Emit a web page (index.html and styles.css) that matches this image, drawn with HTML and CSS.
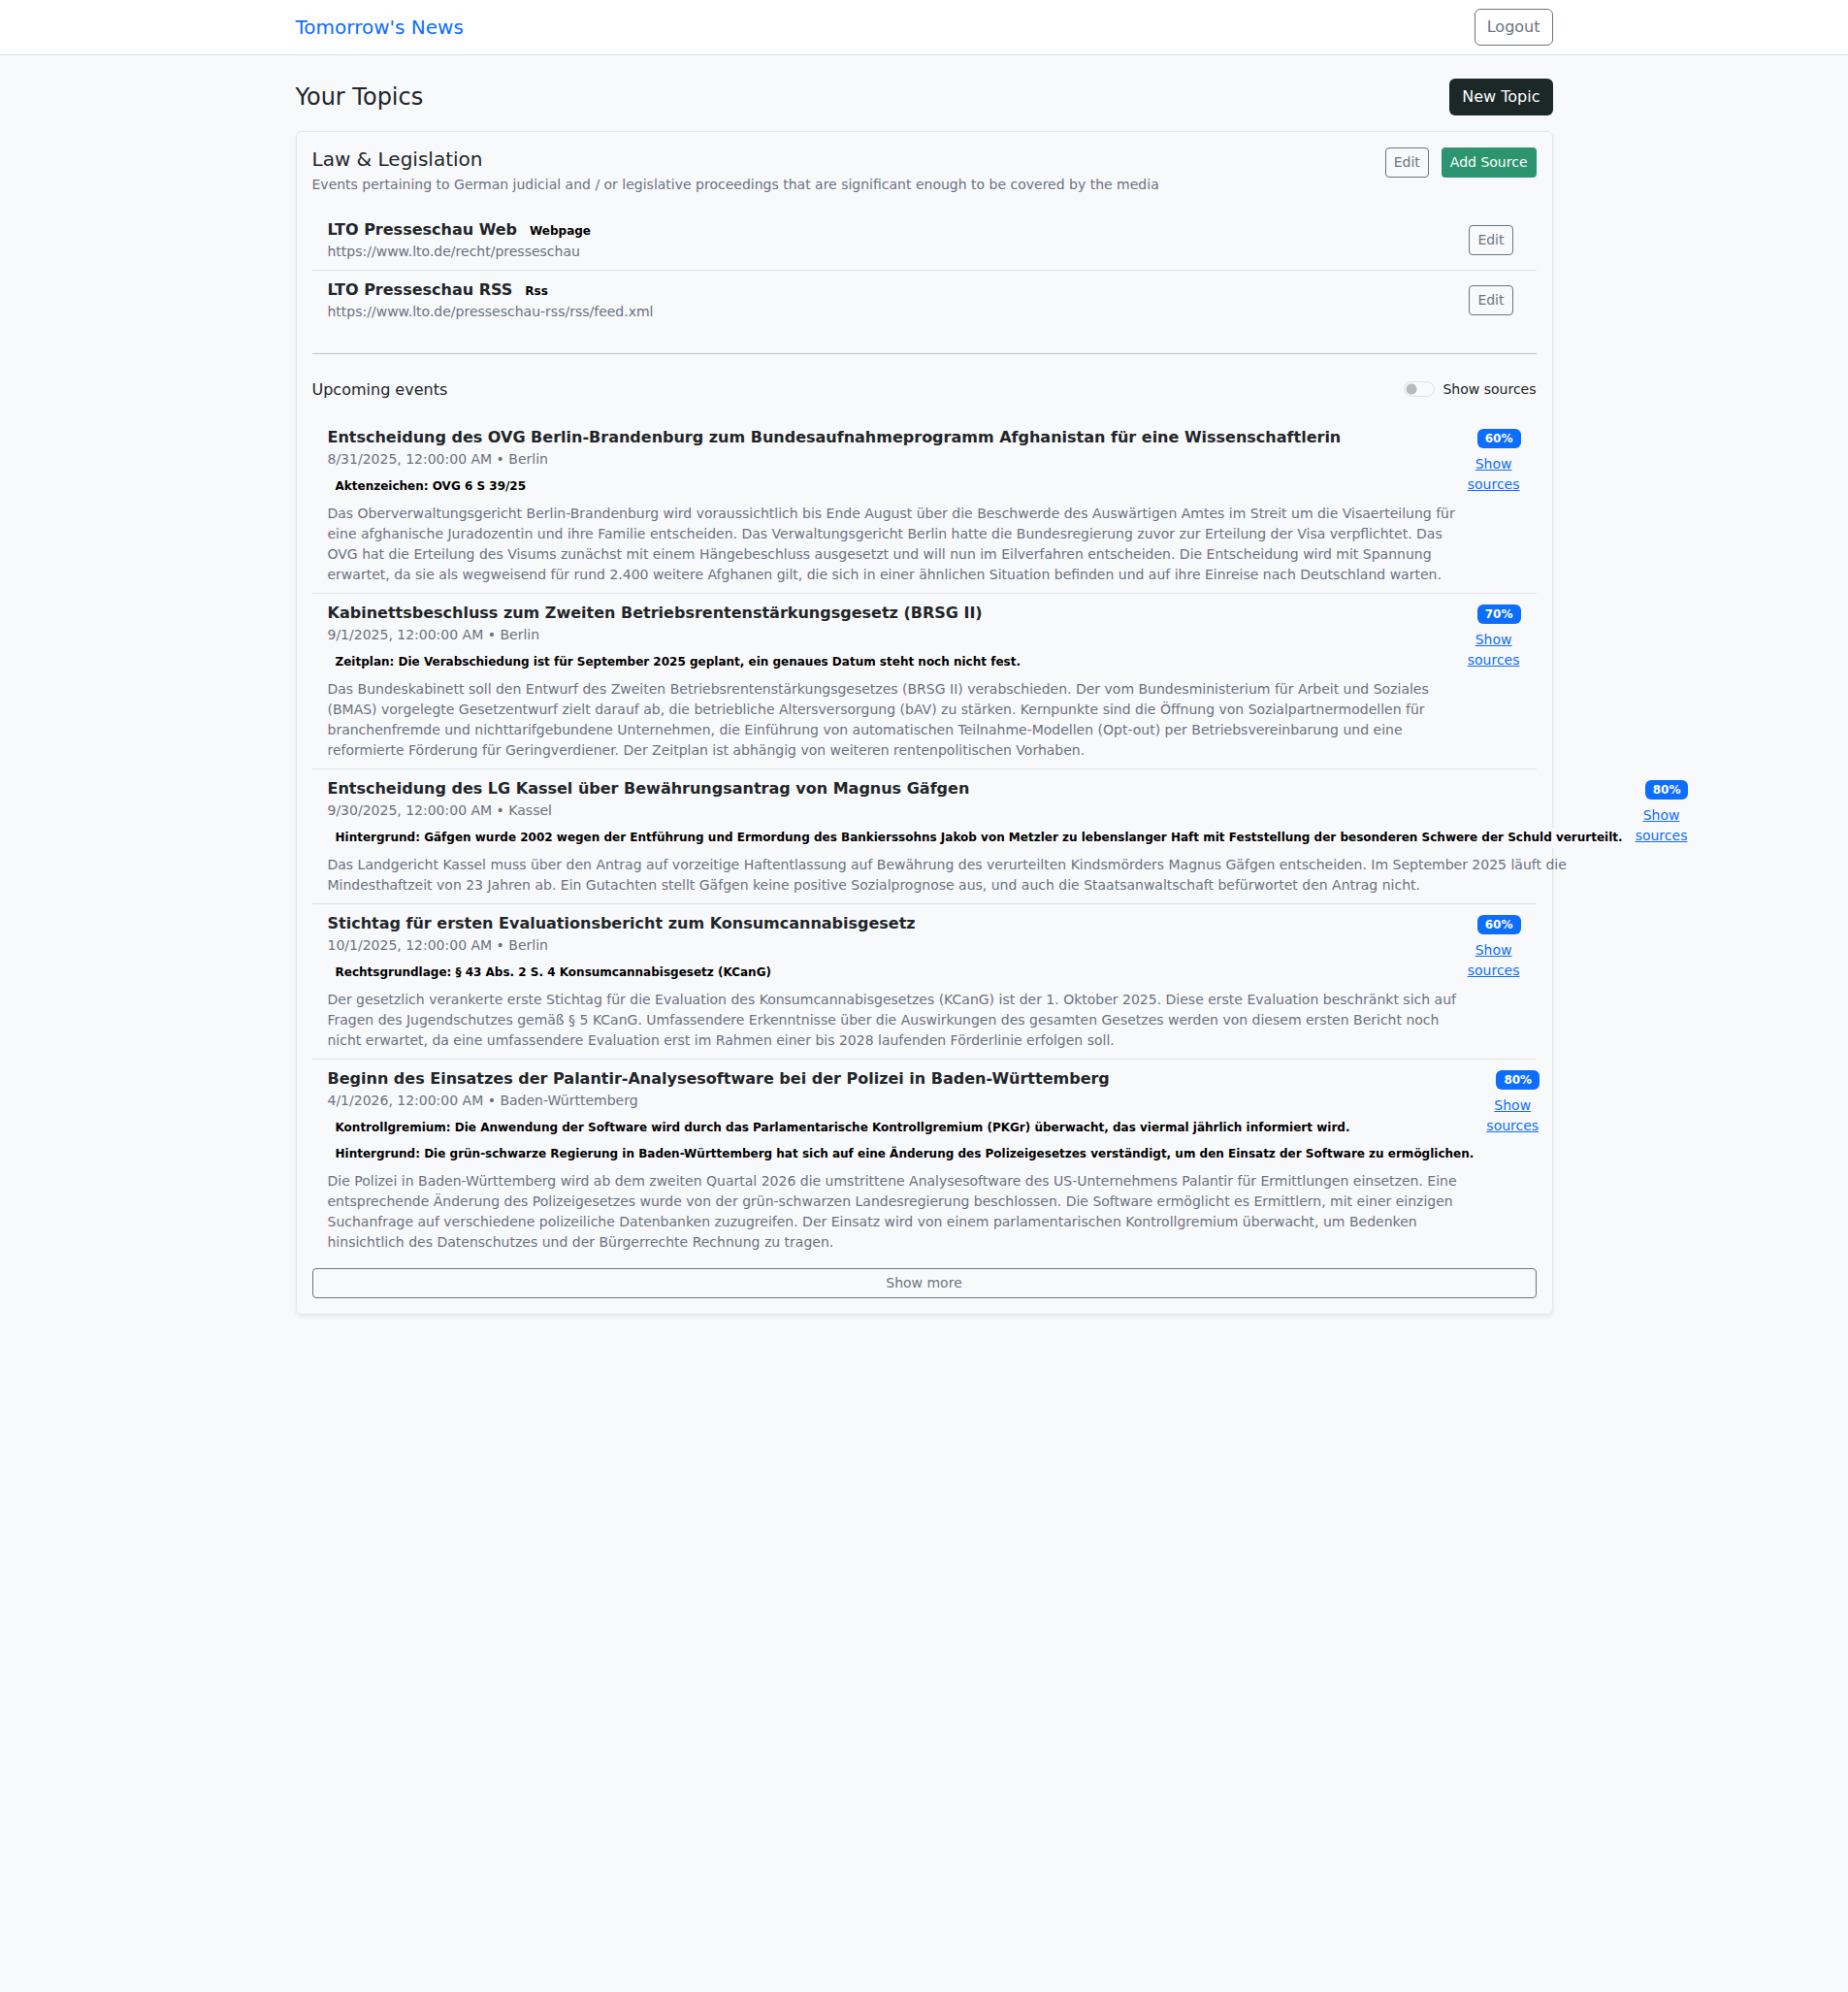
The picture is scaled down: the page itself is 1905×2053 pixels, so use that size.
FILE: index.html
```html
<!DOCTYPE html>
<html lang="en">
<head>
  <meta charset="utf-8">
  <meta name="viewport" content="width=device-width, initial-scale=1">
  <title>Tomorrow's News</title>
  <link rel="stylesheet" href="styles.css">
</head>
<body>
  <header class="navbar">
    <nav class="container navbar-inner">
      <a class="brand" href="#">Tomorrow's News</a>
      <button type="button" class="btn btn-outline">Logout</button>
    </nav>
  </header>

  <main class="container page">
    <div class="page-head">
      <h1 class="page-title">Your Topics</h1>
      <button type="button" class="btn btn-dark">New Topic</button>
    </div>

    <section class="card">
      <div class="card-head">
        <div>
          <h2 class="card-title">Law &amp; Legislation</h2>
          <p class="muted">Events pertaining to German judicial and / or legislative proceedings that are significant enough to be covered by the media</p>
        </div>
        <div class="actions">
          <button type="button" class="btn btn-sm btn-outline">Edit</button>
          <button type="button" class="btn btn-sm btn-green">Add Source</button>
        </div>
      </div>

      <ul class="list">
        <li class="item source">
          <div>
            <div class="source-name"><strong>LTO Presseschau Web</strong><span class="badge">Webpage</span></div>
            <div class="muted">https://www.lto.de/recht/presseschau</div>
          </div>
          <button type="button" class="btn btn-sm btn-outline">Edit</button>
        </li>
        <li class="item source">
          <div>
            <div class="source-name"><strong>LTO Presseschau RSS</strong><span class="badge">Rss</span></div>
            <div class="muted">https://www.lto.de/presseschau-rss/rss/feed.xml</div>
          </div>
          <button type="button" class="btn btn-sm btn-outline">Edit</button>
        </li>
      </ul>

      <hr class="divider">

      <div class="events-head">
        <h3 class="events-title">Upcoming events</h3>
        <div class="switch">
          <input class="switch-input" type="checkbox" role="switch" id="show-sources">
          <label for="show-sources">Show sources</label>
        </div>
      </div>

      <ul class="list">
        <li class="item event">
          <div class="event-main">
            <h4 class="event-title">Entscheidung des OVG Berlin-Brandenburg zum Bundesaufnahmeprogramm Afghanistan für eine Wissenschaftlerin</h4>
            <div class="muted">8/31/2025, 12:00:00 AM • Berlin</div>
            <div class="facts">
              <span class="badge">Aktenzeichen: OVG 6 S 39/25</span>
            </div>
            <p class="muted">Das Oberverwaltungsgericht Berlin-Brandenburg wird voraussichtlich bis Ende August über die Beschwerde des Auswärtigen Amtes im Streit um die Visaerteilung für eine afghanische Juradozentin und ihre Familie entscheiden. Das Verwaltungsgericht Berlin hatte die Bundesregierung zuvor zur Erteilung der Visa verpflichtet. Das OVG hat die Erteilung des Visums zunächst mit einem Hängebeschluss ausgesetzt und will nun im Eilverfahren entscheiden. Die Entscheidung wird mit Spannung erwartet, da sie als wegweisend für rund 2.400 weitere Afghanen gilt, die sich in einer ähnlichen Situation befinden und auf ihre Einreise nach Deutschland warten.</p>
          </div>
          <div class="event-side">
            <span class="badge badge-blue">60%</span>
            <button type="button" class="btn-link">Show sources</button>
          </div>
        </li>
        <li class="item event">
          <div class="event-main">
            <h4 class="event-title">Kabinettsbeschluss zum Zweiten Betriebsrentenstärkungsgesetz (BRSG II)</h4>
            <div class="muted">9/1/2025, 12:00:00 AM • Berlin</div>
            <div class="facts">
              <span class="badge">Zeitplan: Die Verabschiedung ist für September 2025 geplant, ein genaues Datum steht noch nicht fest.</span>
            </div>
            <p class="muted">Das Bundeskabinett soll den Entwurf des Zweiten Betriebsrentenstärkungsgesetzes (BRSG II) verabschieden. Der vom Bundesministerium für Arbeit und Soziales (BMAS) vorgelegte Gesetzentwurf zielt darauf ab, die betriebliche Altersversorgung (bAV) zu stärken. Kernpunkte sind die Öffnung von Sozialpartnermodellen für branchenfremde und nichttarifgebundene Unternehmen, die Einführung von automatischen Teilnahme-Modellen (Opt-out) per Betriebsvereinbarung und eine reformierte Förderung für Geringverdiener. Der Zeitplan ist abhängig von weiteren rentenpolitischen Vorhaben.</p>
          </div>
          <div class="event-side">
            <span class="badge badge-blue">70%</span>
            <button type="button" class="btn-link">Show sources</button>
          </div>
        </li>
        <li class="item event">
          <div class="event-main">
            <h4 class="event-title">Entscheidung des LG Kassel über Bewährungsantrag von Magnus Gäfgen</h4>
            <div class="muted">9/30/2025, 12:00:00 AM • Kassel</div>
            <div class="facts">
              <span class="badge">Hintergrund: Gäfgen wurde 2002 wegen der Entführung und Ermordung des Bankierssohns Jakob von Metzler zu lebenslanger Haft mit Feststellung der besonderen Schwere der Schuld verurteilt.</span>
            </div>
            <p class="muted">Das Landgericht Kassel muss über den Antrag auf vorzeitige Haftentlassung auf Bewährung des verurteilten Kindsmörders Magnus Gäfgen entscheiden. Im September 2025 läuft die Mindesthaftzeit von 23 Jahren ab. Ein Gutachten stellt Gäfgen keine positive Sozialprognose aus, und auch die Staatsanwaltschaft befürwortet den Antrag nicht.</p>
          </div>
          <div class="event-side">
            <span class="badge badge-blue">80%</span>
            <button type="button" class="btn-link">Show sources</button>
          </div>
        </li>
        <li class="item event">
          <div class="event-main">
            <h4 class="event-title">Stichtag für ersten Evaluationsbericht zum Konsumcannabisgesetz</h4>
            <div class="muted">10/1/2025, 12:00:00 AM • Berlin</div>
            <div class="facts">
              <span class="badge">Rechtsgrundlage: § 43 Abs. 2 S. 4 Konsumcannabisgesetz (KCanG)</span>
            </div>
            <p class="muted">Der gesetzlich verankerte erste Stichtag für die Evaluation des Konsumcannabisgesetzes (KCanG) ist der 1. Oktober 2025. Diese erste Evaluation beschränkt sich auf Fragen des Jugendschutzes gemäß § 5 KCanG. Umfassendere Erkenntnisse über die Auswirkungen des gesamten Gesetzes werden von diesem ersten Bericht noch nicht erwartet, da eine umfassendere Evaluation erst im Rahmen einer bis 2028 laufenden Förderlinie erfolgen soll.</p>
          </div>
          <div class="event-side">
            <span class="badge badge-blue">60%</span>
            <button type="button" class="btn-link">Show sources</button>
          </div>
        </li>
        <li class="item event">
          <div class="event-main">
            <h4 class="event-title">Beginn des Einsatzes der Palantir-Analysesoftware bei der Polizei in Baden-Württemberg</h4>
            <div class="muted">4/1/2026, 12:00:00 AM • Baden-Württemberg</div>
            <div class="facts">
              <span class="badge">Kontrollgremium: Die Anwendung der Software wird durch das Parlamentarische Kontrollgremium (PKGr) überwacht, das viermal jährlich informiert wird.</span>
              <span class="badge">Hintergrund: Die grün-schwarze Regierung in Baden-Württemberg hat sich auf eine Änderung des Polizeigesetzes verständigt, um den Einsatz der Software zu ermöglichen.</span>
            </div>
            <p class="muted">Die Polizei in Baden-Württemberg wird ab dem zweiten Quartal 2026 die umstrittene Analysesoftware des US-Unternehmens Palantir für Ermittlungen einsetzen. Eine entsprechende Änderung des Polizeigesetzes wurde von der grün-schwarzen Landesregierung beschlossen. Die Software ermöglicht es Ermittlern, mit einer einzigen Suchanfrage auf verschiedene polizeiliche Datenbanken zuzugreifen. Der Einsatz wird von einem parlamentarischen Kontrollgremium überwacht, um Bedenken hinsichtlich des Datenschutzes und der Bürgerrechte Rechnung zu tragen.</p>
          </div>
          <div class="event-side">
            <span class="badge badge-blue">80%</span>
            <button type="button" class="btn-link">Show sources</button>
          </div>
        </li>
      </ul>

      <button type="button" class="btn btn-sm btn-outline btn-block">Show more</button>
    </section>
  </main>
</body>
</html>
```

FILE: styles.css
```css
:root {
  --bg: #f8f9fb;
  --text: #212529;
  --muted: #6b7280;
  --outline: #6c757d;
  --line: #dee2e6;
  --blue: #0d6efd;
}

*,
*::before,
*::after {
  box-sizing: border-box;
}

body {
  margin: 0;
  background: var(--bg);
  color: var(--text);
  font-family: "DejaVu Sans", sans-serif;
  font-size: 16px;
  line-height: 24px;
}

h1, h2, h3, h4, p, ul {
  margin: 0;
  padding: 0;
  font-weight: 400;
}

.container {
  width: 100%;
  max-width: 1320px;
  margin: 0 auto;
  padding: 0 12px;
}

/* Top bar */
.navbar {
  background: #fff;
  border-bottom: 1px solid var(--line);
}

.navbar-inner {
  display: flex;
  align-items: center;
  justify-content: space-between;
  min-height: 56px;
}

.brand {
  color: var(--blue);
  font-size: 20px;
  line-height: 30px;
  text-decoration: none;
}

/* Buttons */
.btn {
  padding: 6px 12px;
  border: 1px solid transparent;
  border-radius: 6px;
  background: transparent;
  font: inherit;
  white-space: nowrap;
  cursor: pointer;
}

.btn-sm {
  padding: 4px 8px;
  border-radius: 4px;
  font-size: 14px;
  line-height: 21px;
}

.btn-outline {
  border-color: var(--outline);
  color: var(--outline);
}

.btn-dark {
  background: #1c2826;
  color: #fff;
}

.btn-green {
  background: #2c9570;
  color: #fff;
}

.btn-block {
  display: block;
  width: 100%;
  margin-top: 8px;
}

.btn-link {
  margin-top: 5px;
  padding: 0;
  border: 1px solid transparent;
  background: none;
  color: var(--blue);
  font: inherit;
  font-size: 14px;
  line-height: 21px;
  text-decoration: underline;
  cursor: pointer;
}

/* Page */
.page {
  padding-top: 24px;
  padding-bottom: 24px;
}

.page-head {
  display: flex;
  align-items: center;
  justify-content: space-between;
  margin-bottom: 16px;
}

.page-title {
  font-size: 24px;
  line-height: 29px;
}

.muted {
  color: var(--muted);
  font-size: 14px;
  line-height: 21px;
}

/* Topic card */
.card {
  padding: 16px;
  border: 1px solid #e6e8eb;
  border-radius: 6px;
  background: var(--bg);
  box-shadow: 0 2px 4px rgba(0, 0, 0, 0.075);
}

.card-head {
  display: flex;
  align-items: flex-start;
  justify-content: space-between;
  margin-bottom: 16px;
}

.card-title {
  margin-bottom: 4px;
  font-size: 20px;
  line-height: 24px;
}

.actions {
  display: flex;
  gap: 13px;
}

.list {
  list-style: none;
}

.item {
  display: flex;
  padding: 8px 16px;
  border-bottom: 1px solid var(--line);
}

.item:last-child {
  border-bottom: 0;
}

.source {
  align-items: center;
  justify-content: space-between;
  padding-right: 24px;
}

.source-name {
  display: flex;
  align-items: baseline;
  gap: 5px;
}

.badge {
  display: inline-block;
  padding: 4px 8px;
  border-radius: 6px;
  background: var(--bg);
  color: #000;
  font-size: 12px;
  font-weight: 700;
  line-height: 13px;
  white-space: nowrap;
}

.badge-blue {
  background: var(--blue);
  color: #fff;
  line-height: 12px;
}

.divider {
  margin: 24px 0;
  border: 0;
  border-top: 1px solid #c2c4c6;
}

/* Events */
.events-head {
  display: flex;
  align-items: center;
  justify-content: space-between;
  margin-bottom: 18px;
}

.events-title {
  font-size: 16px;
  line-height: 19px;
}

.switch {
  display: flex;
  align-items: center;
  gap: 8px;
  font-size: 14px;
}

.switch-input {
  appearance: none;
  width: 32px;
  height: 16px;
  margin: 0;
  border: 1px solid var(--line);
  border-radius: 8px;
  background: radial-gradient(circle at 7px 7px, #bababc 5px, transparent 6px) no-repeat;
}

.switch-input:checked {
  border-color: var(--blue);
  background: radial-gradient(circle at 23px 7px, #fff 5px, var(--blue) 6px) no-repeat;
}

.event-main {
  flex: 1 1 0;
}

.event-title {
  font-size: 16px;
  font-weight: 700;
}

.facts {
  display: flex;
  flex-direction: column;
  align-items: flex-start;
  gap: 6px;
  padding: 7px 4px 7px 0;
}

.event-side {
  display: flex;
  flex: 0 0 auto;
  flex-direction: column;
  align-items: flex-end;
  width: min-content;
  padding-top: 3px;
}
```
